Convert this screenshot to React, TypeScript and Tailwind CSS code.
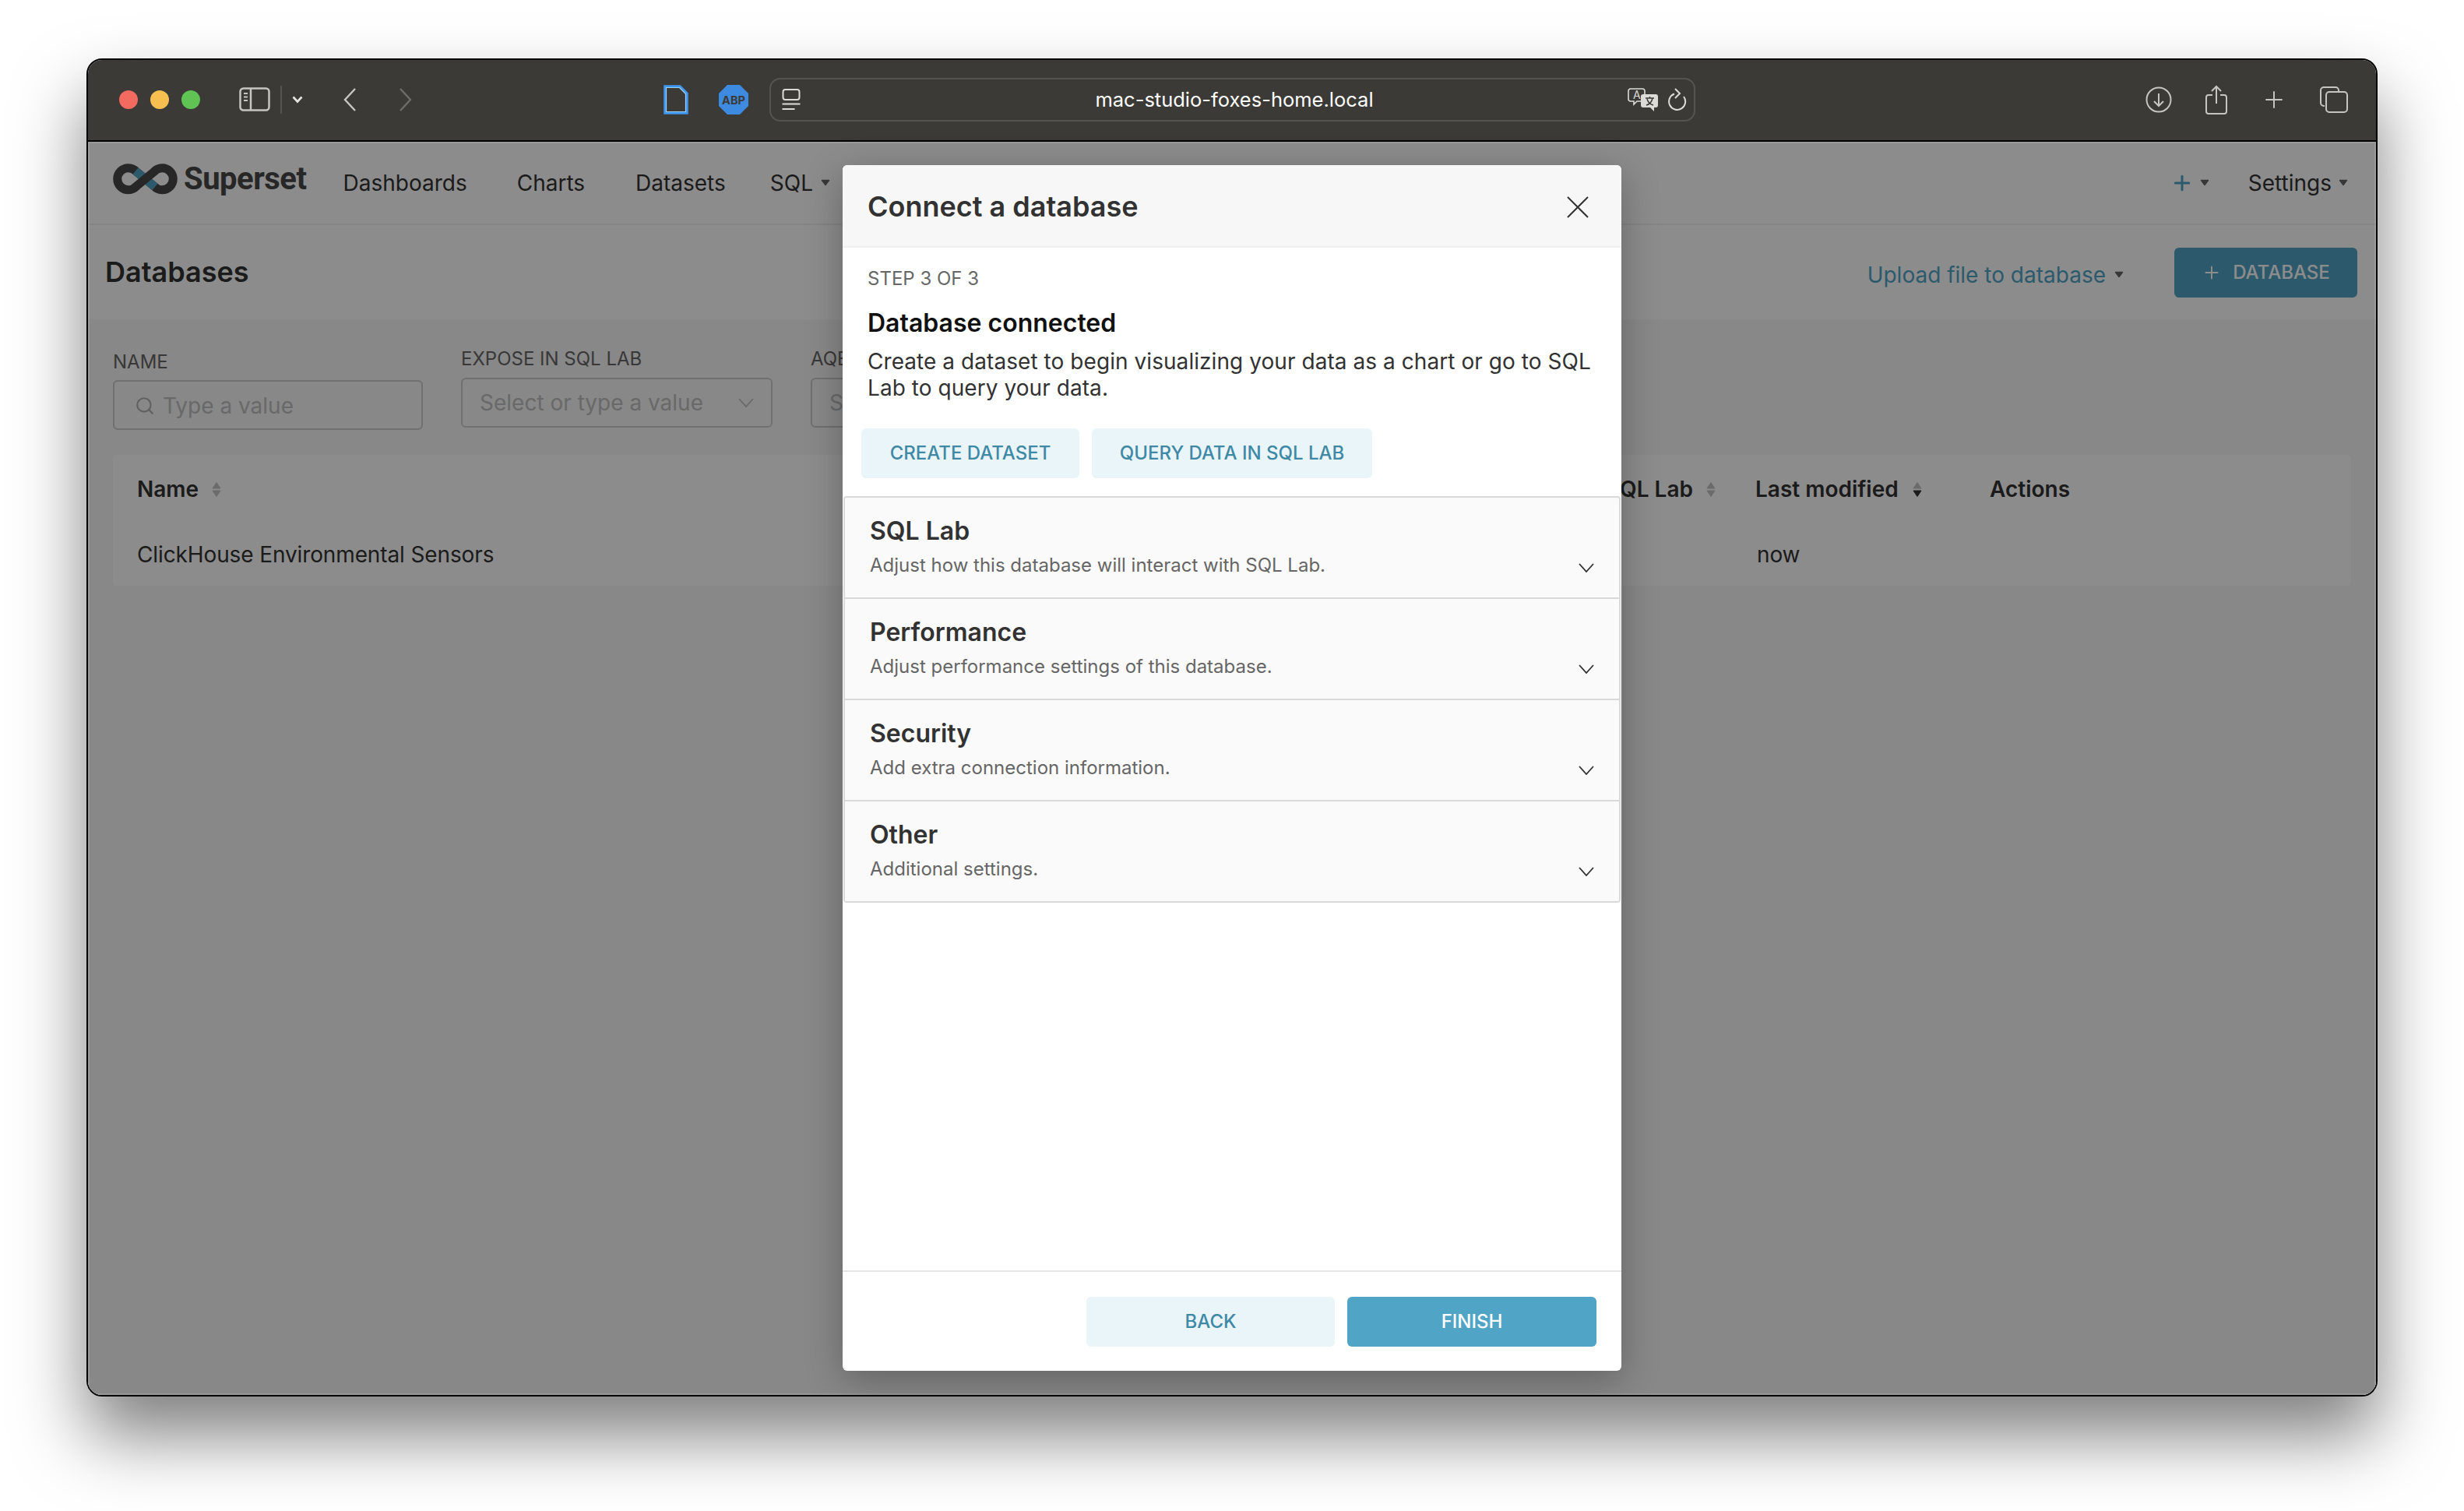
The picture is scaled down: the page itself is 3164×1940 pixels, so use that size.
import { Search, Plus } from 'lucide-react'

function Caret({ className = '' }: { className?: string }) {
  return (
    <svg width="12" height="9" viewBox="0 0 12 9" className={className}>
      <path d="M1.500 1.500h9L6 7.500z" fill="currentColor" stroke="currentColor" strokeWidth="1.500" strokeLinejoin="round" />
    </svg>
  )
}

function SortIcon({ active = false, className = '' }: { active?: boolean; className?: string }) {
  return (
    <svg width="12" height="19" viewBox="0 0 12 19" className={`shrink-0 ${className}`}>
      <path d="M6 0.500l5 7.500H1z" fill="#c4c4c4" stroke="#c4c4c4" strokeLinejoin="round" />
      <path d="M6 18.500L1 11h10z" fill={active ? '#323232' : '#c4c4c4'} stroke={active ? '#323232' : '#c4c4c4'} strokeLinejoin="round" />
    </svg>
  )
}

function Chevron({ className = '' }: { className?: string }) {
  return (
    <svg width="20" height="12" viewBox="0 0 20 12" className={className} fill="none" stroke="currentColor" strokeWidth="1.8">
      <path d="M1 1l9 10 9-10" />
    </svg>
  )
}

function Logo() {
  const left = 'M30 29A14 14 0 1 1 30 10L53 29A14 14 0 1 0 53 10'
  return (
    <svg width="84" height="40" viewBox="0 0 84 39.5" fill="none" strokeWidth="11">
      <path d={left} stroke="#484848" />
      <path d="M29 9.200L39.500 18M43.500 21L54 29.800" stroke="#50a4c5" />
      <path d="M29 29.800L54 9.200" stroke="#484848" />
    </svg>
  )
}

function SidebarIcon() {
  return (
    <svg width="40" height="31" viewBox="0 0 40 31" fill="none" stroke="#c6c5c1" strokeWidth="2.5">
      <rect x="1.500" y="1.500" width="37" height="28" rx="4" />
      <path d="M15 1.500v28" />
      <path d="M6 8h5M6 12.500h5M6 17h5" strokeWidth="2" />
    </svg>
  )
}

function ReaderIcon() {
  return (
    <svg width="24" height="27" viewBox="0 0 24 27" fill="none" stroke="#dcdbd8" strokeWidth="2">
      <rect x="1.500" y="1" width="21" height="13" rx="3" />
      <path d="M0.500 19.500h23M0.500 26h16" />
    </svg>
  )
}

function TranslateIcon() {
  return (
    <svg width="40" height="30" viewBox="0 0 40 30" fill="none">
      <path d="M4 1h15a3 3 0 0 1 3 3v10a3 3 0 0 1-3 3h-7l-4 4v-4H4a3 3 0 0 1-3-3V4a3 3 0 0 1 3-3z" stroke="#dcdbd8" strokeWidth="1.600" />
      <text x="7" y="14" fontSize="14" fill="#dcdbd8" fontFamily="Inter, sans-serif">A</text>
      <path d="M20 8h16a3 3 0 0 1 3 3v11a3 3 0 0 1-3 3h-2v5l-5-5h-9a3 3 0 0 1-3-3V11a3 3 0 0 1 3-3z" fill="#dcdbd8" />
      <path d="M23 13h11M28.500 11v2M32 13c-1 5-4 8-8 9M25 14c1 4 4 7 8 8" stroke="#3b3a36" strokeWidth="1.500" />
    </svg>
  )
}

function ReloadIcon() {
  return (
    <svg width="24" height="30" viewBox="0 0 24 30" fill="none" stroke="#dcdbd8" strokeWidth="2">
      <path d="M8 7.500A10.500 10.500 0 1 0 20 11" />
      <path d="M9 1l6 6-6 6" />
    </svg>
  )
}

function DownloadIcon() {
  return (
    <svg width="34" height="34" viewBox="0 0 34 34" fill="none" stroke="#c6c5c1" strokeWidth="2">
      <circle cx="17" cy="17" r="15.500" />
      <path d="M17 9v16M11 19l6 6 6-6" />
    </svg>
  )
}

function ShareIcon() {
  return (
    <svg width="28" height="38" viewBox="0 0 28 38" fill="none" stroke="#c6c5c1" strokeWidth="2">
      <path d="M9 13H4a3 3 0 0 0-3 3v18a3 3 0 0 0 3 3h20a3 3 0 0 0 3-3V16a3 3 0 0 0-3-3h-5" />
      <path d="M14 24V2M8 8l6-6 6 6" />
    </svg>
  )
}

function TabsIcon() {
  return (
    <svg width="36" height="34" viewBox="0 0 36 34" fill="none" stroke="#c6c5c1" strokeWidth="2">
      <path d="M6 25H5a4 4 0 0 1-4-4V5a4 4 0 0 1 4-4h15a4 4 0 0 1 4 4v1" />
      <rect x="8" y="7" width="27" height="26" rx="4" />
    </svg>
  )
}

function Toolbar() {
  return (
    <div className="flex h-[105px] shrink-0 items-center border-b-2 border-black bg-[#3b3a36] pb-[2px] pl-[40px]">
      <div className="flex gap-4">
        <span className="h-6 w-6 rounded-full bg-[#f26a60]" />
        <span className="h-6 w-6 rounded-full bg-[#f6bf4f]" />
        <span className="h-6 w-6 rounded-full bg-[#5fc454]" />
      </div>
      <div className="ml-[50px]">
        <SidebarIcon />
      </div>
      <span className="ml-[13px] h-9 w-[2px] bg-[#55544f]" />
      <svg width="14" height="10" viewBox="0 0 14 10" className="ml-[13px]" fill="none" stroke="#e6e5e2" strokeWidth="2.600">
        <path d="M1.500 1.500L7 7.500l5.500-6" />
      </svg>
      <svg width="16" height="30" viewBox="0 0 16 30" className="ml-[52px]" fill="none" stroke="#c6c5c1" strokeWidth="2.400">
        <path d="M15 1L2 15l13 14" />
      </svg>
      <svg width="16" height="30" viewBox="0 0 16 30" className="ml-[56px]" fill="none" stroke="#6e6d69" strokeWidth="2.400">
        <path d="M1 1l13 14L1 29" />
      </svg>
      <svg width="32" height="38" viewBox="0 0 32 38" className="ml-[323px]" fill="none">
        <path d="M2 2h19l9 9v25H2z" stroke="#3f97f0" strokeWidth="3.500" />
        <path d="M3.500 3.500h17l8 8v23h-25z" stroke="#9cd0ff" strokeWidth="1.200" />
      </svg>
      <svg width="38" height="38" viewBox="0 0 38 38" className="ml-[39px]">
        <polygon points="11,0 27,0 38,11 38,27 27,38 11,38 0,27 0,11" fill="#3d8be0" />
        <text x="19" y="24.500" textAnchor="middle" fontSize="14.500" fontWeight="700" fill="#3b3a36" fontFamily="Inter, sans-serif">ABP</text>
      </svg>
      <div className="ml-[27px] flex h-[56px] w-[1189px] items-center rounded-[14px] border-2 border-[#55544f] pl-[14px] pr-[9px]">
        <ReaderIcon />
        <span className="flex-1 pl-[52px] pt-[2px] text-center text-[25.500px] text-white">mac-studio-foxes-home.local</span>
        <TranslateIcon />
        <span className="ml-[12px]">
          <ReloadIcon />
        </span>
      </div>
      <div className="ml-[578px]">
        <DownloadIcon />
      </div>
      <div className="ml-[43px]">
        <ShareIcon />
      </div>
      <Plus size={34} strokeWidth={1.400} color="#c6c5c1" className="ml-[43px]" />
      <div className="ml-[42px]">
        <TabsIcon />
      </div>
    </div>
  )
}

function NavBar() {
  return (
    <div className="flex h-[107px] shrink-0 items-center border-b-2 border-[#f0f0f0] bg-white pl-[32px] pr-[36px] text-[28px] text-[#323232]">
      <div className="mb-[10px] flex items-center">
        <Logo />
        <span className="ml-[7px] text-[40px] font-bold tracking-[-0.5px] text-[#484848] [font-family:Roboto,sans-serif]">Superset</span>
      </div>
      <span className="ml-[47px]">Dashboards</span>
      <span className="ml-[64px]">Charts</span>
      <span className="ml-[65px]">Datasets</span>
      <span className="ml-[57px]">SQL</span>
      <Caret className="ml-[10px] text-[#666]" />
      <div className="ml-auto flex items-center">
        <Plus size={30} strokeWidth={2.400} color="#50a4c5" />
        <Caret className="ml-[8px] text-[#666]" />
        <span className="ml-[50px]">Settings</span>
        <Caret className="ml-[9px] text-[#666]" />
      </div>
    </div>
  )
}

function SubHeader() {
  return (
    <div className="flex h-[121px] shrink-0 items-center justify-between bg-white pl-[22px] pr-[24px]">
      <span className="mb-[2px] text-[36px] font-semibold text-[#323232]">Databases</span>
      <div className="flex items-center">
        <span className="mt-[6px] text-[28px] text-[#50a4c5]">Upload file to database</span>
        <Caret className="ml-[11px] mt-[6px] text-[#666]" />
        <button className="ml-[65px] flex h-[64px] w-[235px] items-center justify-center gap-[14px] rounded-[6px] bg-[#50a4c5] text-[24px] font-medium text-white">
          <Plus size={26} strokeWidth={1.800} />
          DATABASE
        </button>
      </div>
    </div>
  )
}

function Filters() {
  return (
    <div className="flex items-start gap-[49px] pl-[32px] pt-[36px]">
      <div className="mt-[4px] w-[398px]">
        <div className="h-[30px] text-[24px] leading-[30px] text-[#666]">NAME</div>
        <div className="mt-[8px] flex h-[64px] items-center rounded-[6px] border-2 border-[#ccc] pl-[26px] pt-[2px] text-[28px] text-[#bfbfbf]">
          <Search size={26} strokeWidth={2} color="#b0b0b0" />
          <span className="ml-[10px]">Type a value</span>
        </div>
      </div>
      <div className="w-[400px]">
        <div className="h-[30px] text-[24px] leading-[30px] text-[#666]">EXPOSE IN SQL LAB</div>
        <div className="mt-[9px] flex h-[64px] items-center justify-between rounded-[6px] border-2 border-[#ccc] pl-[22px] pr-[22px] text-[28px] text-[#bfbfbf]">
          <span>Select or type a value</span>
          <Chevron className="text-[#bfbfbf]" />
        </div>
      </div>
      {/* this filter runs on under the modal */}
      <div className="w-[100px]">
        <div className="h-[30px] text-[24px] leading-[30px] text-[#666]">AQE</div>
        <div className="mt-[9px] flex h-[64px] items-center rounded-l-[6px] border-2 border-[#ccc] pl-[22px] text-[28px] text-[#bfbfbf]">S</div>
      </div>
    </div>
  )
}

function DatabaseTable() {
  return (
    <div className="ml-[32px] mr-[32px] mt-[32px] h-[168px] rounded-[6px] bg-white text-[28px] text-[#323232]">
      <div className="flex h-[88px] items-center pl-[31px] font-semibold">
        <span className="whitespace-nowrap">Name</span>
        <SortIcon className="ml-[17px]" />
        <span className="ml-auto whitespace-nowrap">Expose in SQL Lab</span>
        <SortIcon className="ml-[17px]" />
        <span className="ml-[51px] w-[202px] shrink-0 whitespace-nowrap">Last modified</span>
        <SortIcon active />
        <span className="ml-[87px] mr-[359px] w-[105px] shrink-0 whitespace-nowrap">Actions</span>
      </div>
      <div className="flex h-[80px] items-center pl-[31px] tracking-[-0.12px]">
        <span>ClickHouse Environmental Sensors</span>
        <span className="ml-auto mr-[703px] w-[60px]">now</span>
      </div>
    </div>
  )
}

const sections = [
  { title: 'SQL Lab', sub: 'Adjust how this database will interact with SQL Lab.' },
  { title: 'Performance', sub: 'Adjust performance settings of this database.' },
  { title: 'Security', sub: 'Add extra connection information.' },
  { title: 'Other', sub: 'Additional settings.' },
]

function ConnectModal() {
  return (
    <div className="flex h-[1548px] w-[1000px] flex-col overflow-hidden rounded-[6px] bg-white shadow-[0_12px_48px_rgba(0,0,0,0.28)]">
      <div className="flex h-[106px] shrink-0 items-center justify-between border-b-2 border-[#f0f0f0] bg-[#f7f7f7] pl-[32px] pr-[42px] pt-[2px]">
        <span className="text-[36px] font-semibold text-[#323232]">Connect a database</span>
        <svg width="28" height="28" viewBox="0 0 28 28" fill="none" stroke="#323232" strokeWidth="2" className="mt-[2px]">
          <path d="M1 1l26 26M27 1L1 27" />
        </svg>
      </div>
      <div className="pl-[32px] pr-[32px]">
        <div className="mt-[25px] h-[30px] text-[24px] leading-[30px] text-[#666]">STEP 3 OF 3</div>
        <div className="mt-[22px] h-[40px] text-[32px] font-semibold leading-[40px] text-[#111]">Database connected</div>
        <p className="mt-[12px] text-[28px] leading-[34px] tracking-[0.06px] text-[#323232]">
          Create a dataset to begin visualizing your data as a chart or go to SQL Lab to query your data.
        </p>
      </div>
      <div className="ml-[24px] mt-[35px] flex shrink-0 gap-4">
        <button className="h-[64px] w-[280px] rounded-[6px] bg-[#e9f5f8] text-[24px] font-medium text-[#3f89a6]">CREATE DATASET</button>
        <button className="h-[64px] w-[360px] rounded-[6px] bg-[#e9f5f8] text-[24px] font-medium text-[#3f89a6]">QUERY DATA IN SQL LAB</button>
      </div>
      <div className="ml-[1px] mr-[1px] mt-[23px] shrink-0 rounded-[4px] border-2 border-b-0 border-[#d9d9d9] bg-[#fafafa]">
        {sections.map((s) => (
          <div key={s.title} className="relative h-[130px] border-b-2 border-[#d9d9d9] pl-[32px] pt-[22px]">
            <div className="h-[42px] text-[32px] font-semibold leading-[42px] text-[#323232]">{s.title}</div>
            <div className="mt-[7px] text-[24px] leading-[32px] text-[#666]">{s.sub}</div>
            <Chevron className="absolute right-[32px] top-[84px] text-[#323232]" />
          </div>
        ))}
      </div>
      <div className="mt-auto flex h-[129px] shrink-0 justify-end gap-4 border-t-2 border-[#e5e5e5] pr-[32px] pt-[32px]">
        <button className="h-[64px] w-[319px] rounded-[6px] bg-[#e9f5f8] text-[24px] font-medium text-[#3f89a6]">BACK</button>
        <button className="h-[64px] w-[320px] rounded-[6px] bg-[#50a4c5] text-[24px] font-medium text-white">FINISH</button>
      </div>
    </div>
  )
}

export default function App() {
  return (
    <div className="flex h-[1940px] w-[3164px] items-start justify-center overflow-hidden bg-white pt-[75px] [font-family:Inter,sans-serif]">
      <div className="flex h-[1718px] w-[2942px] flex-col overflow-hidden rounded-[20px] border-2 border-black shadow-[0_50px_90px_rgba(0,0,0,0.5)]">
        <Toolbar />
        <div className="relative flex flex-1 flex-col bg-[#f7f7f7]">
          <NavBar />
          <SubHeader />
          <Filters />
          <DatabaseTable />
          {/* modal backdrop */}
          <div className="absolute inset-0 flex justify-center bg-black/45 pt-[30px] shadow-[inset_0_0_0_2px_rgba(255,255,255,0.12)]">
            <ConnectModal />
          </div>
        </div>
      </div>
    </div>
  )
}
